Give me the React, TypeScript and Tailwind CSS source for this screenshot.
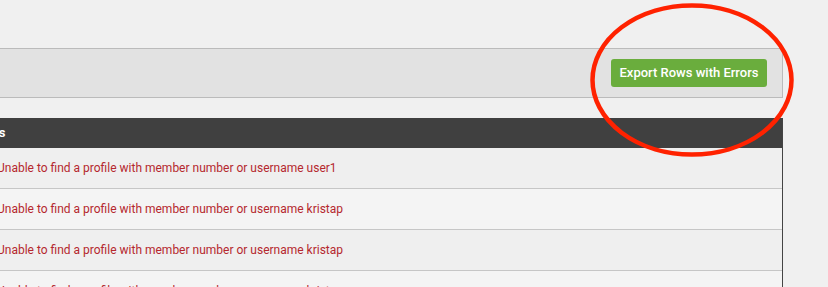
import React from "react"

const errorRows = [
  "Unable to find a profile with member number or username user1",
  "Unable to find a profile with member number or username kristap",
  "Unable to find a profile with member number or username kristap",
  "Unable to find a profile with member number or username kristap",
]

export default function App() {
  return (
    <div className="relative h-[287px] w-[828px] overflow-hidden bg-[#f0f0f0] font-['Roboto',sans-serif]">
      <div className="ml-[-17px] w-[800px] pt-[48px]">
        {/* Toolbar */}
        <div className="flex h-[50px] items-center justify-end border border-[#bbbbbb] bg-[#e2e2e2] pr-[15px]">
          <button className="h-[28px] w-[156px] rounded-[3px] bg-[#6aad3d] text-[13px] font-medium text-white">
            Export Rows with Errors
          </button>
        </div>

        {/* Errors table */}
        <div className="mt-[20px] border-r border-[#444444]">
          <div className="flex h-[30px] items-center bg-[#404040] pl-[14px] text-[13px] font-bold text-white">
            <span className="ml-[-27px]">Errors</span>
          </div>
          {errorRows.map((msg, i) => (
            <div
              key={i}
              className={
                "flex h-[41px] items-center border-b border-[#c6c6c6] pl-[14px] text-[12px] text-[#b5282e] " +
                (i % 2 === 0 ? "bg-[#efefef]" : "bg-[#f4f4f4]")
              }
            >
              {msg}
            </div>
          ))}
        </div>
      </div>

      {/* Annotation circle */}
      <svg className="pointer-events-none absolute left-0 top-0" width="828" height="287">
        <ellipse cx="692" cy="80" rx="99.5" ry="74.5" fill="none" stroke="#ff2200" strokeWidth="4.5" />
      </svg>
    </div>
  )
}
